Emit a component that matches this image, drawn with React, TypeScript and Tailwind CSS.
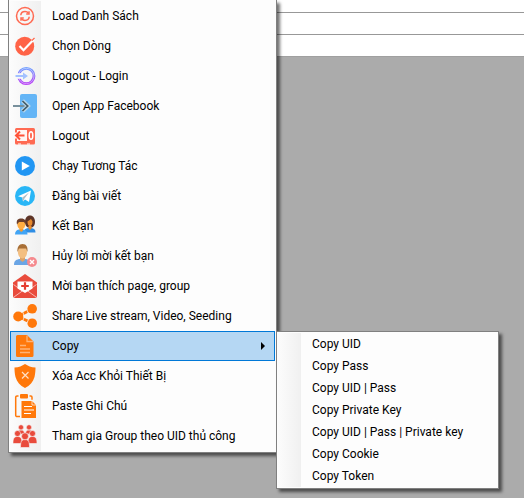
import type { ReactNode } from "react";

const icons: Record<string, ReactNode> = {
  refresh: (
    <g fill="none" stroke="#ff6a52" strokeWidth="1.5">
      <circle cx="12" cy="12" r="8.5" />
      <path d="M7.8 11.2C8 8.800 10 7.600 12 7.600c1.500 0 2.700.6 3.500 1.700M16.200 12.800c-.2 2.400-2.200 3.600-4.200 3.600-1.500 0-2.700-.6-3.500-1.700" />
      <path d="M16 7.200v2.700h-2.800M8 16.800v-2.700h2.800" />
    </g>
  ),
  check: (
    <>
      <circle cx="11.700" cy="12.300" r="9.500" fill="#ff6347" />
      <path d="M6.500 12l4 4.200L21 5.200" fill="none" stroke="#fff" strokeWidth="2.200" />
      <path d="M18.800 6.700L21.500 4" stroke="#ff6347" strokeWidth="1.200" />
    </>
  ),
  login: (
    <>
      <defs>
        <linearGradient id="ring" x1="0" y1="0" x2="0" y2="1">
          <stop offset="0" stopColor="#6f9cff" />
          <stop offset="1" stopColor="#b63df5" />
        </linearGradient>
      </defs>
      <circle cx="13.300" cy="12" r="7.700" fill="none" stroke="url(#ring)" strokeWidth="2.800" />
      <circle cx="13.300" cy="12" r="7.700" fill="none" stroke="#fff" strokeOpacity=".55" strokeWidth=".8" />
      <path d="M3 12h5" stroke="#f8f8f8" strokeWidth="5.500" />
      <path d="M2.500 11H10V8.500l5 3.500-5 3.500V13H2.500z" fill="#a3c1ff" />
    </>
  ),
  openApp: (
    <>
      <rect x="7" y="0" width="17" height="24" rx="2" fill="#64b5f6" />
      <path d="M0 12h14.500" stroke="#78909c" strokeWidth="2" />
      <path d="M9.500 6.700l5.500 5.300-5.500 5.300" fill="none" stroke="#b7d7ec" strokeWidth="4" />
      <path d="M9.500 7l5.200 5-5.200 5" fill="none" stroke="#455a64" strokeWidth="1.700" />
    </>
  ),
  logout: (
    <>
      <rect x="2" y="4" width="20" height="16.500" rx="1.500" fill="#ff6a52" />
      <path d="M4 6h10v11H4z" fill="#fff6f3" />
      <path d="M1.500 8.500h3v6h-3z" fill="#fff6f3" />
      <path d="M11.500 11.500H3M7 7.500l-4 4 4 4" fill="none" stroke="#ff5238" strokeWidth="2" />
      <ellipse cx="18" cy="11.500" rx="1.800" ry="3.800" fill="none" stroke="#fff" strokeWidth="1.500" />
      <path d="M5 20h3m6 0h3" stroke="#fff" strokeWidth="1" />
    </>
  ),
  play: (
    <>
      <circle cx="12" cy="12" r="10" fill="#2196f3" />
      <path d="M8.800 7.500v9l8-4.500z" fill="#fff" />
    </>
  ),
  telegram: (
    <>
      <circle cx="12" cy="12" r="10" fill="#29b6f6" />
      <path d="M5 12.300L18 6.500l-2 11.500-4-2.500-2 2-.6-4z" fill="#fff" />
      <path d="M9.400 13.500l6.600-5-4.500 6-1.500 3z" fill="#b0bec5" />
    </>
  ),
  friends: (
    <>
      <path d="M11 18.500c0-3 1.500-4 4-4.500h3c3 .5 4.500 1.500 4.500 4.500z" fill="#2f8ee5" />
      <path d="M12 8c0-4 2-6.500 5-6.500S22 4 22 8c0 3-1.500 5-3 5.500h-4c-1.500-.5-3-2.500-3-5.500z" fill="#5d3427" />
      <path d="M14.500 7.500l3.500-2.500 1.500 2.500c0 3-1 4.500-2.500 4.500s-2.500-1.500-2.500-4.500z" fill="#e88a2c" />
      <path d="M15.500 12h3v2.500L17 16l-1.500-1.500z" fill="#e88a2c" />
      <path d="M2 20.500c0-3 1.500-4.500 4-5h4c3 .5 4.500 2 4.500 5z" fill="#42a5f5" />
      <path d="M6.500 14h3.500v2.500L8.300 18l-1.800-1.500z" fill="#f59a2c" />
      <ellipse cx="8.300" cy="10.500" rx="4" ry="4.800" fill="#ffad42" />
      <path d="M4 10.500C3 6 5 4.500 8.500 4.500c3 0 4.700 2 4 6L11 8H6z" fill="#6b3e2b" />
    </>
  ),
  unfriend: (
    <>
      <path d="M1 21c0-4 1.500-5 5-6h7c4 1 5 2.500 5 6z" fill="#6aa5e5" />
      <path d="M7 12.500h5V16l-2.500 2L7 16z" fill="#dda36a" />
      <ellipse cx="9.500" cy="8" rx="4.600" ry="6.500" fill="#f3bf82" />
      <path d="M4.500 8C4 3 6 0 9.500 0c4 0 5.500 3 5 8L13 4.500H6z" fill="#a86f36" />
      <circle cx="19" cy="18" r="5" fill="#f58a8e" />
      <path d="M17 16l4 4m0-4l-4 4" stroke="#fff" strokeWidth="1.400" />
    </>
  ),
  invite: (
    <>
      <path d="M0 8.500L12 0l12 8.500V22a2 2 0 0 1-2 2H2a2 2 0 0 1-2-2z" fill="#e94b3c" />
      <path d="M4.500 7.500h15v7L12 19l-7.500-4.500z" fill="#fff" />
      <path d="M12 8.200v7.600M8.200 12h7.600" stroke="#e43d30" strokeWidth="2.200" />
      <path d="M.5 10.500L9 16.700M23.500 10.500L15 16.700M1 23l9-6.500h4l9 6.500" fill="none" stroke="#fff" strokeOpacity=".75" strokeWidth=".8" />
    </>
  ),
  share: (
    <>
      <path d="M5 12.500L19 5M5 12.500l14 6.500" stroke="#ff780a" strokeWidth="3" />
      <g fill="#ff780a">
        <circle cx="5.200" cy="12.500" r="5" />
        <circle cx="19.200" cy="4.800" r="4.800" />
        <circle cx="19.200" cy="19.200" r="4.800" />
      </g>
      <path d="M9.500 7.500l2 5-2 5M13.500 5l2 4.500M13.500 20l2-4.500" fill="none" stroke="#f7f7f7" strokeWidth=".8" />
    </>
  ),
  copy: (
    <>
      <path d="M3 2.500A1.500 1.500 0 0 1 4.500 1H14l6.500 6.500v14a1.500 1.500 0 0 1-1.500 1.500H4.500A1.500 1.500 0 0 1 3 21.500z" fill="#ff780a" />
      <path d="M14 1.500v6h6M7 11.500h6M7 15h10M7 18.500h10" fill="none" stroke="#ffb375" strokeWidth="1.300" />
    </>
  ),
  shield: (
    <>
      <path d="M12 0c3 2 6 3.300 10.500 3.500 0 3-.2 6-1 9.500-1.500 5-4.500 8.500-9.500 11-5-2.500-8-6-9.500-11-.8-3.500-1-6.500-1-9.500C6 3.300 9 2 12 0z" fill="#ff780a" />
      <path d="M9 8l6.500 6.500m0-6.500L9 14.500" stroke="#ffe0c4" strokeWidth="1.200" />
    </>
  ),
  paste: (
    <>
      <path d="M5.500 2H4a1.300 1.300 0 0 0-1.300 1.300v18A1.300 1.300 0 0 0 4 22.600h3M16.500 2h1.300A1.300 1.300 0 0 1 19 3.300v2.500" fill="none" stroke="#ff780a" strokeWidth="1.500" />
      <rect x="7" y="0" width="8" height="4.500" rx="1" fill="#ff780a" />
      <path d="M8.500 7H19l4 4v13H8.500z" fill="#ff780a" />
      <path d="M19 7v4h4" fill="none" stroke="#fff" strokeWidth=".7" />
      <path d="M11 12.500h8M11 16h10M11 19.500h7" stroke="#fff" strokeWidth="1.100" />
    </>
  ),
  group: (
    <g fill="#e94b3c" stroke="#f6f6f6" strokeWidth=".6">
      <path d="M4.500 10c0-3 1-4 3.500-4s3.500 1 3.500 4zM12.500 10c0-3 1-4 3.500-4s3.500 1 3.500 4z" />
      <circle cx="8" cy="3.300" r="2.600" />
      <circle cx="16" cy="3.300" r="2.600" />
      <path d="M0 19.500c0-5 1-7 4.500-7S9 14.500 9 19.500zM15 19.500c0-5 1-7 4.500-7s4.500 2 4.500 7z" />
      <circle cx="4.500" cy="9.500" r="3" />
      <circle cx="19.500" cy="9.500" r="3" />
      <path d="M7.500 23.500c0-6 1-8 4.500-8s4.500 2 4.500 8z" />
      <circle cx="12" cy="12.300" r="3.500" />
    </g>
  ),
};

const menuItems = [
  { icon: "refresh", label: "Load Danh Sách" },
  { icon: "check", label: "Chọn Dòng" },
  { icon: "login", label: "Logout - Login" },
  { icon: "openApp", label: "Open App Facebook" },
  { icon: "logout", label: "Logout" },
  { icon: "play", label: "Chạy Tương Tác" },
  { icon: "telegram", label: "Đăng bài viết" },
  { icon: "friends", label: "Kết Bạn" },
  { icon: "unfriend", label: "Hủy lời mời kết bạn" },
  { icon: "invite", label: "Mời bạn thích page, group" },
  { icon: "share", label: "Share Live stream, Video, Seeding" },
  { icon: "copy", label: "Copy", open: true },
  { icon: "shield", label: "Xóa Acc Khỏi Thiết Bị" },
  { icon: "paste", label: "Paste Ghi Chú" },
  { icon: "group", label: "Tham gia Group theo UID thủ công" },
];

const copyItems = [
  "Copy UID",
  "Copy Pass",
  "Copy UID | Pass",
  "Copy Private Key",
  "Copy UID | Pass | Private key",
  "Copy Cookie",
  "Copy Token",
];

function Submenu() {
  return (
    <ul
      role="menu"
      aria-label="Copy"
      className="absolute top-0 left-full z-10 ml-px w-[223px] border border-[#808080] bg-[#fdfdfd] p-px shadow-[3px_3px_3px_rgba(0,0,0,0.55)]"
    >
      {copyItems.map((label) => (
        <li key={label} role="none">
          <button type="button" role="menuitem" className="flex h-[22px] w-full items-center text-left">
            <span className="mr-[11px] h-full w-[23px] bg-linear-to-r from-[#fcfcfc] to-[#f0f0f0]" />
            {label}
          </button>
        </li>
      ))}
    </ul>
  );
}

export default function App() {
  return (
    <div className="relative min-h-screen overflow-hidden bg-[#ababab] font-['Roboto','Noto_Sans',sans-serif] text-[12px] text-black">
      <div className="bg-white">
        <div className="h-[13px] border-b border-[#989898]" />
        <div className="h-[22px] border-b border-[#989898]" />
        <div className="h-[22px] border-b border-[#a0a0a0]" />
      </div>
      <ul
        role="menu"
        aria-label="Menu"
        className="absolute top-0 left-2 w-[269px] border border-t-0 border-[#808080] bg-[#fdfdfd] px-px pt-px pb-px shadow-[3px_3px_3px_rgba(0,0,0,0.55)]"
      >
        {menuItems.map(({ icon, label, open }) => (
          <li key={label} role="none" className="relative">
            <button
              type="button"
              role="menuitem"
              aria-haspopup={open ? "menu" : undefined}
              aria-expanded={open}
              className={
                open
                  ? "flex h-[30px] w-full items-center bg-[#b5d7f3] text-left outline outline-1 -outline-offset-1 outline-[#0078d7]"
                  : "flex h-[30px] w-full items-center text-left"
              }
            >
              <span
                className={
                  open
                    ? "mr-[11px] flex h-full w-[31px] items-center justify-center"
                    : "mr-[11px] flex h-full w-[31px] items-center justify-center bg-linear-to-r from-[#fcfcfc] to-[#f0f0f0]"
                }
              >
                <svg viewBox="0 0 24 24" className="mr-px size-6" aria-hidden="true">
                  {icons[icon]}
                </svg>
              </span>
              <span className="grow whitespace-nowrap">{label}</span>
              {open && (
                <svg viewBox="0 0 4 8" className="mr-[10px] h-2 w-1" aria-hidden="true">
                  <path d="M0 0l4 4-4 4z" />
                </svg>
              )}
            </button>
            {open && <Submenu />}
          </li>
        ))}
      </ul>
    </div>
  );
}
